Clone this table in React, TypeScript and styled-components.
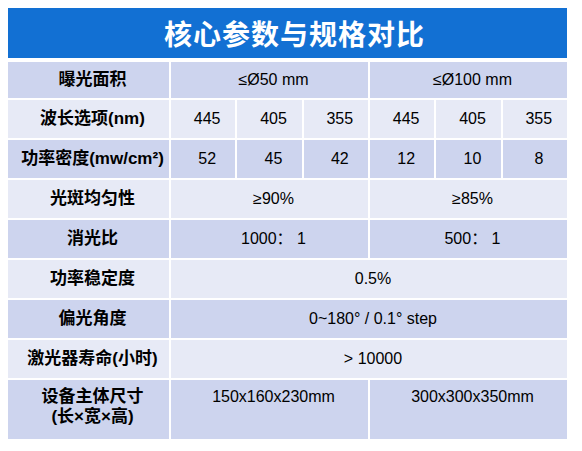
import React from 'react';
import styled, { createGlobalStyle } from 'styled-components';

type Cell = { text: string; span?: number };
type Row = { label: React.ReactNode; cells: Cell[]; tall?: boolean };

const rows: Row[] = [
  { label: '曝光面积', cells: [{ text: '≤Ø50 mm', span: 3 }, { text: '≤Ø100 mm', span: 3 }] },
  {
    label: '波长选项(nm)',
    cells: ['445', '405', '355', '445', '405', '355'].map((text) => ({ text })),
  },
  {
    label: '功率密度(mw/cm²)',
    cells: ['52', '45', '42', '12', '10', '8'].map((text) => ({ text })),
  },
  { label: '光斑均匀性', cells: [{ text: '≥90%', span: 3 }, { text: '≥85%', span: 3 }] },
  { label: '消光比', cells: [{ text: '1000： 1', span: 3 }, { text: '500： 1', span: 3 }] },
  { label: '功率稳定度', cells: [{ text: '0.5%', span: 6 }] },
  { label: '偏光角度', cells: [{ text: '0~180° / 0.1° step', span: 6 }] },
  { label: '激光器寿命(小时)', cells: [{ text: '> 10000', span: 6 }] },
  {
    label: (
      <>
        设备主体尺寸
        <br />
        (长×宽×高)
      </>
    ),
    cells: [{ text: '150x160x230mm', span: 3 }, { text: '300x300x350mm', span: 3 }],
    tall: true,
  },
];

const App = () => {
  return (
    <>
      <GlobalStyle />
      <Wrapper>
        <Title>核心参数与规格对比</Title>
        <Table>
          {rows.map((row, i) => {
            const shade = i % 2 === 0 ? 'dark' : 'light';
            return (
              <React.Fragment key={i}>
                <LabelCell shade={shade} tall={row.tall}>
                  {row.label}
                </LabelCell>
                {row.cells.map((c, j) => (
                  <ValueCell key={j} shade={shade} tall={row.tall} span={c.span ?? 1}>
                    {c.text}
                  </ValueCell>
                ))}
              </React.Fragment>
            );
          })}
        </Table>
      </Wrapper>
    </>
  );
};

const GlobalStyle = createGlobalStyle`
  body {
    margin: 8px;
    background: #ffffff;
    font-family: 'Liberation Sans', 'Noto Sans CJK SC', sans-serif;
  }
`;

const Wrapper = styled.div`
  width: 559px;
  display: flex;
  flex-direction: column;
  gap: 4px;
`;

const Title = styled.div`
  height: 50px;
  background: #1270d3;
  color: #ffffff;
  display: flex;
  align-items: center;
  justify-content: center;
  padding-left: 14px;
  font-size: 28px;
  font-weight: 700;
  letter-spacing: 1px;
  font-family: 'Noto Sans CJK SC', sans-serif;
`;

const Table = styled.div`
  display: grid;
  grid-template-columns: 161px repeat(6, 1fr);
  grid-template-rows: 36px repeat(7, 38px) 59px;
  gap: 2px;
  background: #ffffff;
`;

const Base = styled.div<{ shade: string; tall?: boolean }>`
  background: ${(p) => (p.shade === 'dark' ? '#cdd4ee' : '#e7eaf6')};
  color: #000000;
  display: flex;
  justify-content: center;
  align-items: ${(p) => (p.tall ? 'flex-start' : 'center')};
  padding: ${(p) => (p.tall ? '7px 0 0 8px' : '0 0 0 8px')};
  line-height: 20px;
  text-align: center;
  white-space: nowrap;
`;

const LabelCell = styled(Base)`
  font-size: 17px;
  font-weight: 700;
`;

const ValueCell = styled(Base)<{ span: number }>`
  grid-column: span ${(p) => p.span};
  font-size: 16px;
`;

export default App;
